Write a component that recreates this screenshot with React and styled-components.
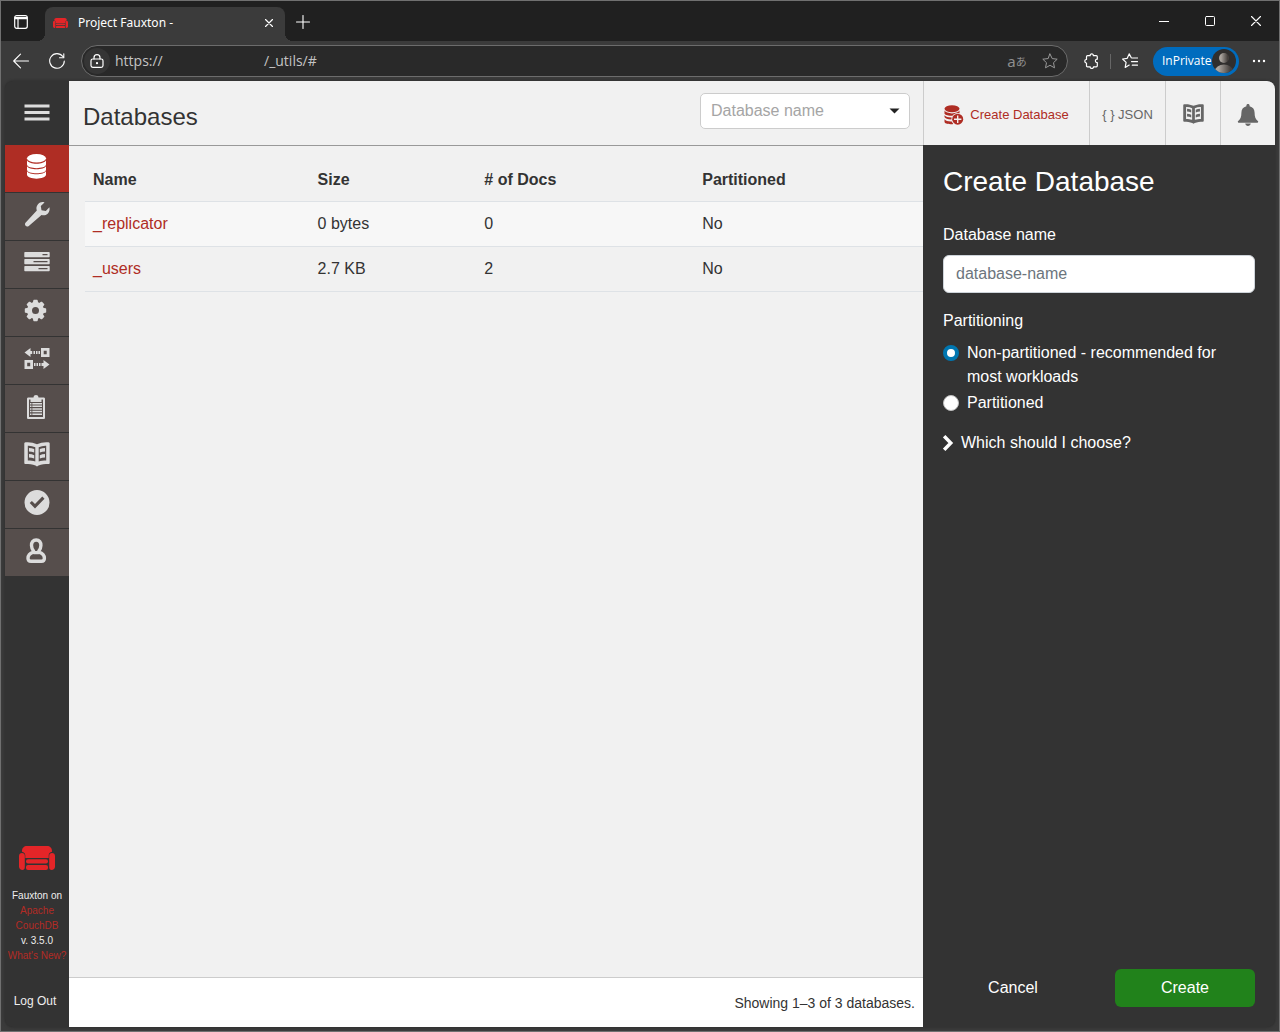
import React from "react";
import styled, { createGlobalStyle, css } from "styled-components";

const uiFont = `"Noto Sans", "Open Sans", sans-serif`;
const pageFont = `"Liberation Sans", Arial, Helvetica, sans-serif`;

const GlobalStyle = createGlobalStyle`
  *, *::before, *::after { box-sizing: border-box; }
  body { margin: 0; background: #3b3b3b; font-family: ${pageFont}; }
  button, input, select { font: inherit; margin: 0; }
  svg { display: block; flex: none; }
`;

/* Browser window */
const Window = styled.div`
  display: flex;
  flex-direction: column;
  min-height: 100vh;
  border: 1px solid #707070;
  background: #3b3b3b;
`;

const plainButton = css`
  display: flex;
  align-items: center;
  justify-content: center;
  padding: 0;
  border: 0;
  background: none;
  color: #fff;
  cursor: pointer;
`;

const TitleBar = styled.div`
  display: flex;
  align-items: center;
  height: 40px;
  padding-top: 2px;
  background: #202020;
`;

const IconButton = styled.button`
  ${plainButton}
  width: ${(p) => p.$width || 36}px;
  height: 32px;
`;

const Tab = styled.div`
  position: relative;
  display: flex;
  align-items: center;
  align-self: flex-end;
  gap: 10px;
  width: 240px;
  height: 34px;
  margin-left: 4px;
  padding: 0 0 2px 8px;
  border-radius: 8px 8px 0 0;
  background: #3b3b3b;
  color: #fff;
  font: 12px/16px ${uiFont};

  &::before,
  &::after {
    content: "";
    position: absolute;
    bottom: 0;
    width: 8px;
    height: 8px;
  }
  &::before {
    right: 100%;
    background: radial-gradient(circle at 0 0, #202020 8px, #3b3b3b 8px);
  }
  &::after {
    left: 100%;
    background: radial-gradient(circle at 100% 0, #202020 8px, #3b3b3b 8px);
  }
`;

const TabTitle = styled.span`
  flex: 1;
  white-space: nowrap;
`;

const WindowButtons = styled.div`
  display: flex;
  margin: 0 0 2px auto;
`;

const Toolbar = styled.div`
  display: flex;
  align-items: center;
  height: 40px;
  padding: 0 2px;
`;

const AddressBar = styled.div`
  display: flex;
  flex: 1;
  align-items: center;
  height: 32px;
  margin: 0 6px;
  border: 1px solid #6c6c6c;
  border-radius: 16px;
  background: #292929;
  color: #c4c4c4;
  font: 14px/20px "Open Sans", "Noto Sans", sans-serif;
`;

const SiteInfo = styled.button`
  ${plainButton}
  width: 26px;
  height: 26px;
  margin: 0 5px 0 2px;
  border-radius: 13px;
  background: #353535;
`;

const UrlScheme = styled.span`
  width: 149px;
`;

const UrlPath = styled.span`
  flex: 1;
`;

const TranslateButton = styled(IconButton)`
  color: #8e8e8e;
  font: 15px/20px ${uiFont};

  span {
    font: 11px/20px "Noto Sans CJK JP", sans-serif;
  }
`;

const Divider = styled.span`
  width: 1px;
  height: 15px;
  background: #666;
`;

const ProfileButton = styled.button`
  ${plainButton}
  justify-content: space-between;
  width: 86px;
  height: 29px;
  margin: 0 2px 0 4px;
  padding: 0 3px 0 9px;
  border-radius: 15px;
  background: #006cbe;
  font: 12px/16px "Open Sans", "Noto Sans", sans-serif;
`;

/* Application */
const Page = styled.div`
  display: flex;
  flex: 1;
  margin: 0 4px 4px;
  border-radius: 8px;
  overflow: hidden;
  background: #333;
  color: #333;
  font-size: 16px;
  line-height: 24px;
  box-shadow: 0 0 3px #2a2a2a;
`;

const Sidebar = styled.aside`
  display: flex;
  flex: none;
  flex-direction: column;
  width: 64px;
  color: #dcdcdc;
`;

const MenuButton = styled.button`
  ${plainButton}
  height: 64px;
  color: #dcdcdc;
`;

const NavLink = styled.a`
  display: flex;
  justify-content: center;
  height: 48px;
  padding-top: 9px;
  border-bottom: 1px solid #333;
  background: ${(p) => (p.$active ? "#af2d24" : "#564e4c")};
  color: ${(p) => (p.$active ? "#fff" : "#dcdcdc")};
`;

const SidebarFooter = styled.footer`
  display: flex;
  flex-direction: column;
  align-items: center;
  margin-top: auto;
  padding-bottom: 17px;
  color: #eee;
  font-size: 10px;
  line-height: 15px;
  text-align: center;
`;

const Version = styled.div`
  margin: 18px 0 29px;
  white-space: nowrap;

  a {
    display: block;
    color: #b32b25;
    text-decoration: none;
  }
`;

const LogOut = styled.a`
  margin-right: 4px;
  color: #eee;
  font-size: 12px;
  line-height: 18px;
  text-decoration: none;
`;

const Main = styled.main`
  display: flex;
  flex: 1;
  flex-direction: column;
  min-width: 0;
  background: #f1f1f1;
`;

const Header = styled.header`
  display: flex;
  align-items: flex-end;
  justify-content: space-between;
  height: 65px;
  padding: 0 13px 16px 14px;
  border-bottom: 1px solid #999;
`;

const PageTitle = styled.h1`
  margin: 0;
  font-size: 24px;
  font-weight: 400;
  line-height: 24px;
`;

const SelectBox = styled.div`
  display: grid;
  align-items: center;
  width: 210px;
  color: #222;

  > * {
    grid-area: 1 / 1;
  }
  svg {
    justify-self: end;
    margin-right: 10px;
    pointer-events: none;
  }
`;

const Select = styled.select`
  width: 100%;
  height: 36px;
  padding: 0 30px 0 10px;
  border: 1px solid #ccc;
  border-radius: 5px;
  appearance: none;
  background: #fff;
  color: #a5a5a5;
`;

const Content = styled.section`
  flex: 1;
  padding: 10px 0 0 16px;
`;

const Table = styled.table`
  width: 100%;
  border-collapse: collapse;
  table-layout: fixed;
`;

const Col = styled.col`
  width: ${(p) => p.$width};
`;

const Cell = styled.td`
  height: 45px;
  padding: 0 8px;
  border-bottom: 1px solid #dee2e6;
  text-align: left;

  a {
    color: #af2d24;
    text-decoration: none;
  }
`;

const HeadCell = styled(Cell)`
  padding-top: 4px;
`;

const Row = styled.tr`
  &:nth-child(odd) {
    background: #f7f7f7;
  }
`;

const ListFooter = styled.footer`
  height: 50px;
  padding: 13px 8px 0;
  border-top: 1px solid #ccc;
  background: #fff;
  font-size: 14px;
  text-align: right;
`;

const SidePanel = styled.aside`
  display: flex;
  flex: none;
  flex-direction: column;
  width: 352px;
  color: #fff;
`;

const Actions = styled.div`
  display: flex;
  height: 64px;
  background: #f1f1f1;
`;

const Action = styled.button`
  display: flex;
  flex: ${(p) => (p.$width ? "none" : 1)};
  align-items: center;
  justify-content: center;
  gap: 6px;
  width: ${(p) => p.$width || 0}px;
  padding: 3px 0 0;
  border: 0;
  border-left: 1px solid #ccc;
  background: none;
  color: ${(p) => (p.$primary ? "#af2d24" : "#666")};
  font-size: 13px;
  cursor: pointer;
`;

const Tray = styled.form`
  display: flex;
  flex: 1;
  flex-direction: column;
  padding: 20px;
`;

const TrayTitle = styled.h2`
  margin: 0 0 24px;
  font-size: 28px;
  font-weight: 400;
  line-height: 34px;
`;

const Label = styled.label`
  display: block;
  margin-bottom: 8px;
`;

const TextInput = styled.input`
  width: 100%;
  height: 38px;
  margin-bottom: 16px;
  padding: 0 12px;
  border: 1px solid #ced4da;
  border-radius: 6px;
  background: #fff;

  &::placeholder {
    color: #6c757d;
    opacity: 1;
  }
`;

const RadioGroup = styled.fieldset`
  display: grid;
  gap: 2px;
  margin: 0 0 16px;
  padding: 0;
  border: 0;
`;

const Legend = styled.legend`
  margin-bottom: 8px;
  padding: 0;
`;

const RadioLabel = styled.label`
  display: flex;
  align-items: flex-start;
  gap: 8px;
`;

const Radio = styled.input`
  flex: none;
  width: 16px;
  height: 16px;
  margin-top: 4px;
  border: 1px solid #bfbfbf;
  border-radius: 8px;
  appearance: none;
  background: #fff;

  &:checked {
    border: 4px solid #0076b0;
  }
`;

const HelpToggle = styled.button`
  ${plainButton}
  justify-content: flex-start;
  gap: 7px;
`;

const TrayButtons = styled.div`
  display: grid;
  grid-template-columns: 1fr 1fr;
  gap: 32px;
  margin-top: auto;
`;

const TrayButton = styled.button`
  height: 38px;
  border: 0;
  border-radius: 6px;
  background: ${(p) => (p.$primary ? "#21821b" : "none")};
  color: #fff;
  cursor: pointer;
`;

/* Drawings */
const Line = ({ w = 16, h = w, stroke = 1, color = "currentColor", children }) => (
  <svg width={w} height={h} viewBox={`0 0 ${w} ${h}`} fill="none" stroke={color} strokeWidth={stroke} strokeLinecap="round" strokeLinejoin="round" aria-hidden="true">
    {children}
  </svg>
);

const Glyph = ({ size = 26, children }) => (
  <svg width={size} height={size} viewBox="0 0 26 26" fill="currentColor" aria-hidden="true">
    {children}
  </svg>
);

const Couch = ({ width }) => (
  <svg width={width} height={Math.round((width * 24) / 36)} viewBox="0 0 36 24" fill="#e42528" aria-hidden="true">
    <path d="M8 0h20c3 0 5 2 5 5v.8c-2 .4-3.300 1.700-3.300 3.700v2.500H6.300V9.500C6.300 7.500 5 6.200 3 5.800V5c0-3 2-5 5-5Z" />
    <path d="M3 7c1.600 0 2.800 1 2.800 2.700v11.600c0 1.700-1 2.700-2.300 2.700C1.500 24 0 22.500 0 20.500V10c0-1.800 1.200-3 3-3ZM33 7c-1.600 0-2.800 1-2.800 2.700v11.600c0 1.700 1 2.700 2.300 2.700 2 0 3.500-1.500 3.500-3.500V10c0-1.800-1.200-3-3-3Z" />
    <rect x="7" y="13.300" width="22" height="4.300" rx="2" />
    <rect x="7" y="19" width="22" height="5" rx="2" />
  </svg>
);

const DatabaseShape = () => (
  <>
    <ellipse cx="12.500" cy="4.300" rx="9.500" ry="4.300" />
    <path d="M3 6.300c1.500 4.600 17.500 4.600 19 0v4.300c0 4.700-19 4.700-19 0Z" />
    <path d="M3 12c1.500 4.300 17.500 4.300 19 0v3.700c0 4.700-19 4.700-19 0Z" />
    <path d="M3 17c1.500 4.300 17.500 4.300 19 0v3.500c0 5.500-19 5.500-19 0Z" />
  </>
);

const BookShape = () => (
  <path
    fillRule="evenodd"
    d="M1.500.3C5.500-.2 9.500.7 13 2.300 16.500.7 20.500-.2 24.500.3c.8.100 1.200.6 1.200 1.300v19.200c0 .8-.4 1.200-1.200 1.200-3.500 0-7 .3-10 1.600L13 24.500l-1.500-.9c-3-1.300-6.500-1.600-10-1.600C.7 22 .3 21.600.3 20.800V1.600C.3.900.7.400 1.500.3ZM3.800 3.700v14.800c2.800 0 5.200.2 7.500 1V5.200C8.800 4.100 6.300 3.500 3.800 3.700Zm18.400 0c-2.500-.2-5 .4-7.500 1.500v14.300c2.300-.8 4.700-1 7.500-1ZM5 6c1.800 0 3.500.4 5.200 1.100v3.400C8.500 9.800 6.800 9.500 5 9.400Zm0 6.100c1.800 0 3.500.4 5.200 1.100v3.400c-1.700-.7-3.400-1-5.200-1.100ZM21 6c-1.800 0-3.500.4-5.200 1.100v3.400C17.500 9.800 19.200 9.500 21 9.400Zm0 6.100c-1.800 0-3.500.4-5.200 1.100v3.400c1.700-.7 3.400-1 5.200-1.100Z"
  />
);

const navItems = [
  { label: "Databases", active: true, shape: <DatabaseShape /> },
  {
    label: "Setup",
    shape: (
      <path d="M20.500.4 16.800 4l.7 4.200 4.300.8 3.600-3.700c.6 2.700-.2 5.200-2 6.700-1.600 1.400-3.800 1.700-5.900 1L4.800 24c-2.300 1.700-5-.8-3.300-3.200L12.800 8.500c-.8-2.300-.3-4.600 1.200-6.300C15.600.3 18.100-.3 20.500.4Z" />
    ),
  },
  {
    label: "Active Tasks",
    shape: (
      <path fillRule="evenodd" d="M1 2h24c.4 0 .7.300.7.700v3.800c0 .4-.3.700-.7.700H1c-.4 0-.7-.3-.7-.7V2.700c0-.4.300-.7.700-.7Zm17.500 1.900v1.300h5V3.900ZM1 9h24c.4 0 .7.300.7.700v3.800c0 .4-.3.700-.7.700H1c-.4 0-.7-.3-.7-.7V9.700c0-.4.300-.7.700-.7Zm8.500 1.900v1.300h14v-1.300ZM1 16h24c.4 0 .7.300.7.700v3.800c0 .4-.3.700-.7.700H1c-.4 0-.7-.3-.7-.7v-3.800c0-.4.300-.7.700-.7Zm13.500 1.900v1.300h9v-1.300Z" />
    ),
  },
  {
    label: "Configuration",
    shape: (
      <>
        <circle cx="11.500" cy="12.500" r="6" fill="none" stroke="currentColor" strokeWidth="5" />
        {[0, 45, 90, 135, 180, 225, 270, 315].map((a) => (
          <path key={a} d="M8.700 5.500 9.300 2.500c0-.5.300-.7.700-.7h3c.4 0 .7.200.7.700l.6 3Z" transform={`rotate(${a} 11.500 12.500)`} />
        ))}
      </>
    ),
  },
  {
    label: "Replication",
    shape: (
      <path fillRule="evenodd" d="M.5 6.500 6.500 2v3h1.700v3H6.500v3ZM9.500 5H11v3H9.500ZM12 5h1.500v3H12ZM14.500 5H16v3h-1.500ZM17 2h8.500v9H17Zm2.700 2.800v3.400h3V4.800ZM.5 14H9v9H.5Zm2.700 2.800v3.400h3v-3.400ZM10 17h1.500v3H10ZM12.500 17H14v3h-1.500ZM15 17h1.500v3H15ZM17.500 17h2v-3l6 4.500-6 4.500v-3h-2Z" />
    ),
  },
  {
    label: "News",
    shape: (
      <path fillRule="evenodd" d="M8 3.500h1.500C9.500.2 14.500.2 14.500 3.500H16h3.500c1 0 1.500.5 1.500 1.500v18.500c0 1-.5 1.500-1.500 1.500h-15C3.500 25 3 24.500 3 23.500V5c0-1 .5-1.500 1.500-1.500H8ZM6.500 5.500H5V23h14V5.500h-1.500V8h-11ZM6 9h1.500v1.500H6Zm2.300 0H18v1.500H8.300ZM6 11.600h1.500v1.500H6Zm2.300 0H18v1.500H8.300ZM6 14.200h1.500v1.500H6Zm2.300 0H18v1.500H8.300ZM6 16.800h1.500v1.500H6Zm2.300 0H18v1.500H8.300ZM6 19.400h1.500v1.500H6Zm2.300 0H18v1.500H8.300Z" />
    ),
  },
  { label: "Documentation", shape: <BookShape /> },
  {
    label: "Verify",
    shape: (
      <path fillRule="evenodd" d="M13 0a12.500 12.500 0 1 0 0 25 12.500 12.500 0 0 0 0-25Zm5.300 6.500 2.200 2.200L11 18.400l-5.300-5.300 2.200-2.200 3.100 3.100Z" />
    ),
  },
  {
    label: "Account",
    shape: (
      <path fill="none" stroke="currentColor" strokeWidth="3.400" strokeLinejoin="round" d="M12.200 2C9 2 7.300 4.400 7.500 7.500c.1 2.500.8 4.200 2 5.500v1.200C6.500 15.200 4 17 4 20.300c0 2.200 1.300 3 3 3h10.400c1.700 0 3-.8 3-3 0-3.300-2.500-5.100-5.500-6.100V13c1.200-1.300 1.900-3 2-5.500.200-3.100-1.500-5.500-4.700-5.500ZM9.500 14.600h5.400" />
    ),
  },
];

const databases = [
  { name: "_replicator", size: "0 bytes", docs: 0, partitioned: "No" },
  { name: "_users", size: "2.7 KB", docs: 2, partitioned: "No" },
];

const starPath = "M8 1 10.200 5.600 15.200 6.200 11.500 9.700 12.500 14.800 8 12.300 3.500 14.800 4.500 9.700.8 6.200 5.800 5.600Z";

function BrowserChrome() {
  return (
    <>
      <TitleBar>
        <IconButton $width={40} aria-label="Tab actions">
          <Line w={14} stroke={1.2}>
            <rect x="0.700" y="0.700" width="12.600" height="12.600" rx="2" />
            <path d="M1 2.500h12M1 3.700h12M4 4v9" />
          </Line>
        </IconButton>
        <Tab>
          <Couch width={15} />
          <TabTitle>Project Fauxton -</TabTitle>
          <IconButton $width={32} aria-label="Close tab">
            <Line w={8} stroke={1.2}><path d="m.5.500 7 7m0-7-7 7" /></Line>
          </IconButton>
        </Tab>
        <IconButton aria-label="New tab">
          <Line w={14} stroke={1.1}><path d="M7 .5v13M.5 7h13" /></Line>
        </IconButton>
        <WindowButtons>
          <IconButton $width={46} aria-label="Minimize"><Line w={10}><path d="M0 5.500h10" /></Line></IconButton>
          <IconButton $width={46} aria-label="Maximize"><Line w={10}><rect x="0.500" y="0.500" width="9" height="9" rx="1" /></Line></IconButton>
          <IconButton $width={46} aria-label="Close"><Line w={10} stroke={1.1}><path d="m.5.500 9 9m0-9-9 9" /></Line></IconButton>
        </WindowButtons>
      </TitleBar>
      <Toolbar>
        <IconButton aria-label="Back">
          <Line w={16} stroke={1.1}><path d="M15.500 8H.8M7.500 1.200.7 8l6.800 6.800" /></Line>
        </IconButton>
        <IconButton aria-label="Refresh">
          <Line w={16} stroke={1.1}><path d="M15.300 8A7.300 7.300 0 1 1 13.800 3.500M14.800.7v4h-4.300" /></Line>
        </IconButton>
        <AddressBar>
          <SiteInfo aria-label="Site information">
            <Line w={14} stroke={1.200}>
              <rect x="1" y="5" width="12" height="8.300" rx="1.800" />
              <path d="M4 5V3.700a3 3 0 0 1 6 0V5" />
              <circle cx="7" cy="9.200" r="0.500" fill="currentColor" />
            </Line>
          </SiteInfo>
          <UrlScheme>https://</UrlScheme>
          <UrlPath>/_utils/#</UrlPath>
          <TranslateButton $width={32} aria-label="Translate">a<span>あ</span></TranslateButton>
          <IconButton $width={34} aria-label="Add to favorites"><Line color="#999"><path d={starPath} /></Line></IconButton>
        </AddressBar>
        <IconButton aria-label="Extensions">
          <Line stroke={1.200}><path d="M3.500 2.700H6.200C5.700.3 9.800.3 9.300 2.700h3c.7 0 1 .3 1 1v2.500c-2.500-.3-2.500 3.600 0 3.300v3.300c0 .7-.3 1-1 1H9.500c.3 2-3.700 2-3.300 0H3.500c-.7 0-1-.3-1-1V10C.3 10.200.300 6.200 2.500 6.500V3.700c0-.7.3-1 1-1Z" /></Line>
        </IconButton>
        <Divider />
        <IconButton $width={38} aria-label="Favorites">
          <Line stroke={1.200}><path d="M9.300 4.800 7.200.9 5.200 5.300.6 6l3.500 3.400-.9 5 4-2.300M10.300 5h5.200M9.500 8.600h6M10.300 12.200h5.200" /></Line>
        </IconButton>
        <ProfileButton>
          InPrivate
          <svg width="24" height="24" viewBox="0 0 24 24" aria-hidden="true">
            <defs>
              <linearGradient id="avatar"><stop offset="0.200" stopColor="#aaa49e" /><stop offset="0.850" stopColor="#45403d" /></linearGradient>
              <clipPath id="avatarClip"><circle cx="12" cy="12" r="12" /></clipPath>
            </defs>
            <g clipPath="url(#avatarClip)">
              <path fill="#302e2d" d="M0 0h24v24H0Z" />
              <circle cx="12" cy="9" r="5" fill="url(#avatar)" />
              <ellipse cx="12" cy="22" rx="9" ry="6.500" fill="url(#avatar)" />
            </g>
          </svg>
        </ProfileButton>
        <IconButton aria-label="Settings and more">
          <svg width="14" height="4" viewBox="0 0 14 4" fill="currentColor" aria-hidden="true">
            <circle cx="2" cy="2" r="1.200" /><circle cx="7" cy="2" r="1.200" /><circle cx="12" cy="2" r="1.200" />
          </svg>
        </IconButton>
      </Toolbar>
    </>
  );
}

function CreateDatabaseTray() {
  return (
    <Tray onSubmit={(e) => e.preventDefault()}>
      <TrayTitle>Create Database</TrayTitle>
      <Label htmlFor="new-database">Database name</Label>
      <TextInput id="new-database" type="text" placeholder="database-name" />
      <RadioGroup>
        <Legend>Partitioning</Legend>
        <RadioLabel>
          <Radio type="radio" name="partitioning" defaultChecked />
          Non-partitioned - recommended for most workloads
        </RadioLabel>
        <RadioLabel>
          <Radio type="radio" name="partitioning" />
          Partitioned
        </RadioLabel>
      </RadioGroup>
      <HelpToggle type="button">
        <svg width="11" height="16" viewBox="0 0 11 16" fill="none" stroke="currentColor" strokeWidth="3.400" aria-hidden="true">
          <path d="m1.200 1.200 6.600 6.800-6.600 6.800" />
        </svg>
        Which should I choose?
      </HelpToggle>
      <TrayButtons>
        <TrayButton type="button">Cancel</TrayButton>
        <TrayButton type="submit" $primary>Create</TrayButton>
      </TrayButtons>
    </Tray>
  );
}

export default function App() {
  return (
    <Window>
      <GlobalStyle />
      <BrowserChrome />
      <Page>
        <Sidebar>
          <MenuButton aria-label="Menu">
            <Glyph><path d="M.5 4.500h25v3H.5ZM.5 11h25v3H.5ZM.5 17.500h25v3H.5Z" /></Glyph>
          </MenuButton>
          <nav>
            {navItems.map((item) => (
              <NavLink key={item.label} href="#" aria-label={item.label} $active={item.active}>
                <Glyph>{item.shape}</Glyph>
              </NavLink>
            ))}
          </nav>
          <SidebarFooter>
            <Couch width={36} />
            <Version>
              Fauxton on
              <a href="#">Apache<br />CouchDB</a>
              v. 3.5.0
              <a href="#">What's New?</a>
            </Version>
            <LogOut href="#">Log Out</LogOut>
          </SidebarFooter>
        </Sidebar>
        <Main>
          <Header>
            <PageTitle>Databases</PageTitle>
            <SelectBox>
              <Select aria-label="Database name" defaultValue="">
                <option value="">Database name</option>
                {databases.map((db) => <option key={db.name}>{db.name}</option>)}
              </Select>
              <svg width="11" height="6" viewBox="0 0 11 6" fill="currentColor" aria-hidden="true"><path d="M.5.500h10L5.500 5.500Z" /></svg>
            </SelectBox>
          </Header>
          <Content>
            <Table>
              <colgroup>
                <Col $width="26.8%" />
                <Col $width="19.9%" />
                <Col $width="26%" />
                <Col $width="auto" />
              </colgroup>
              <thead>
                <tr>
                  {["Name", "Size", "# of Docs", "Partitioned"].map((h) => <HeadCell as="th" key={h}>{h}</HeadCell>)}
                </tr>
              </thead>
              <tbody>
                {databases.map((db) => (
                  <Row key={db.name}>
                    <Cell><a href="#">{db.name}</a></Cell>
                    <Cell>{db.size}</Cell>
                    <Cell>{db.docs}</Cell>
                    <Cell>{db.partitioned}</Cell>
                  </Row>
                ))}
              </tbody>
            </Table>
          </Content>
          <ListFooter>Showing 1–3 of 3 databases.</ListFooter>
        </Main>
        <SidePanel>
          <Actions>
            <Action $primary>
              <svg width="20" height="20" viewBox="0 0 20 20" fill="currentColor" aria-hidden="true">
                <ellipse cx="8" cy="3.700" rx="7.500" ry="3.500" />
                <path d="M.5 5.600c1.800 3.700 13.200 3.700 15 0v3.200c-1.800 2.700-13.200 2.700-15 0ZM.5 10.300c1.500 1.700 4.500 2.400 8.500 2.100l-.5 2c-4 .2-7.300-.5-8-2.300ZM.5 14.300c1.500 1.700 4 2.400 8 2.100l1 2.600C4.800 19.600.5 18.700.5 16.800Z" />
                <circle cx="13.700" cy="14.200" r="6.300" fill="#f1f1f1" />
                <circle cx="13.700" cy="14.200" r="5.500" />
                <path d="M13 10.500h1.400v3h3v1.400h-3v3H13v-3h-3v-1.400h3Z" fill="#f1f1f1" />
              </svg>
              Create Database
            </Action>
            <Action $width={76}>{"{ } JSON"}</Action>
            <Action $width={55} aria-label="Documentation">
              <Glyph size={21}><BookShape /></Glyph>
            </Action>
            <Action $width={55} aria-label="Notifications">
              <svg width="22" height="22" viewBox="0 0 22 22" fill="currentColor" aria-hidden="true">
                <path d="M11 0c1 0 1.600.600 1.600 1.600v.6c3.400.7 5 3.400 5 6.600 0 4 .9 6.500 3.200 8.300.8.700.4 1.600-.4 1.600H1.600c-.8 0-1.200-.9-.4-1.600C3.500 15.300 4.400 12.800 4.400 8.800c0-3.200 1.600-5.900 5-6.600v-.6C9.400.6 10 0 11 0ZM8.200 19.500h5.600C13.500 21 12.400 22 11 22s-2.500-1-2.800-2.500Z" />
              </svg>
            </Action>
          </Actions>
          <CreateDatabaseTray />
        </SidePanel>
      </Page>
    </Window>
  );
}
